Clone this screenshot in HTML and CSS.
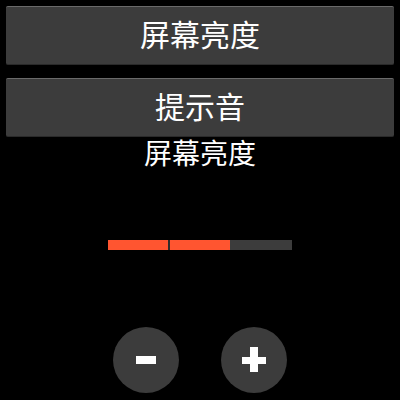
FILE: index.html
```html
<!DOCTYPE html>
<html>
<head>
<meta charset="utf-8">
<link rel="stylesheet" href="styles.css">
</head>
<body>
<div class="screen">
  <div class="menu">
    <div class="btn">屏幕亮度</div>
    <div class="btn">提示音</div>
  </div>
  <div class="label">屏幕亮度</div>
  <div class="bar">
    <div class="seg on"></div>
    <div class="tick"></div>
    <div class="seg on"></div>
    <div class="seg off"></div>
  </div>
  <div class="controls">
    <div class="round"><span class="minus"></span></div>
    <div class="round"><span class="plus-h"></span><span class="plus-v"></span></div>
  </div>
</div>
</body>
</html>
```
FILE: styles.css
```css
html, body {
  margin: 0;
  padding: 0;
  background: #000;
}
.screen {
  width: 400px;
  height: 400px;
  display: flex;
  flex-direction: column;
  align-items: center;
  font-family: "Noto Sans CJK SC", "Noto Sans", sans-serif;
  color: #fff;
}
.menu {
  width: 388px;
  padding-top: 6px;
  display: flex;
  flex-direction: column;
  gap: 13px;
}
.btn {
  height: 59px;
  box-sizing: border-box;
  padding-bottom: 6px;
  background: #3c3c3c;
  border-top: 1px solid #6a6a6a;
  border-bottom: 1px solid #2a2a2a;
  border-radius: 2px;
  display: flex;
  align-items: center;
  justify-content: center;
  font-size: 30px;
  line-height: 1;
}
.label {
  margin-top: 0;
  font-size: 28px;
  line-height: 30px;
}
.bar {
  margin-top: 73px;
  width: 184px;
  height: 10px;
  display: flex;
}
.seg {
  width: 60px;
  height: 10px;
}
.seg.on { background: #ff5530; }
.seg.off { background: #3c3c3c; width: 62px; }
.tick { width: 2px; background: #2c2c2c; }
.controls {
  margin-top: 77px;
  display: flex;
  gap: 42px;
}
.round {
  width: 66px;
  height: 66px;
  border-radius: 50%;
  background: #3c3c3c;
  position: relative;
}
.minus {
  position: absolute;
  left: 23px;
  top: 29px;
  width: 20px;
  height: 8px;
  background: #fff;
}
.plus-h {
  position: absolute;
  left: 21px;
  top: 30px;
  width: 24px;
  height: 7px;
  background: #fff;
}
.plus-v {
  position: absolute;
  left: 29px;
  top: 20px;
  width: 8px;
  height: 25px;
  background: #fff;
}
```
